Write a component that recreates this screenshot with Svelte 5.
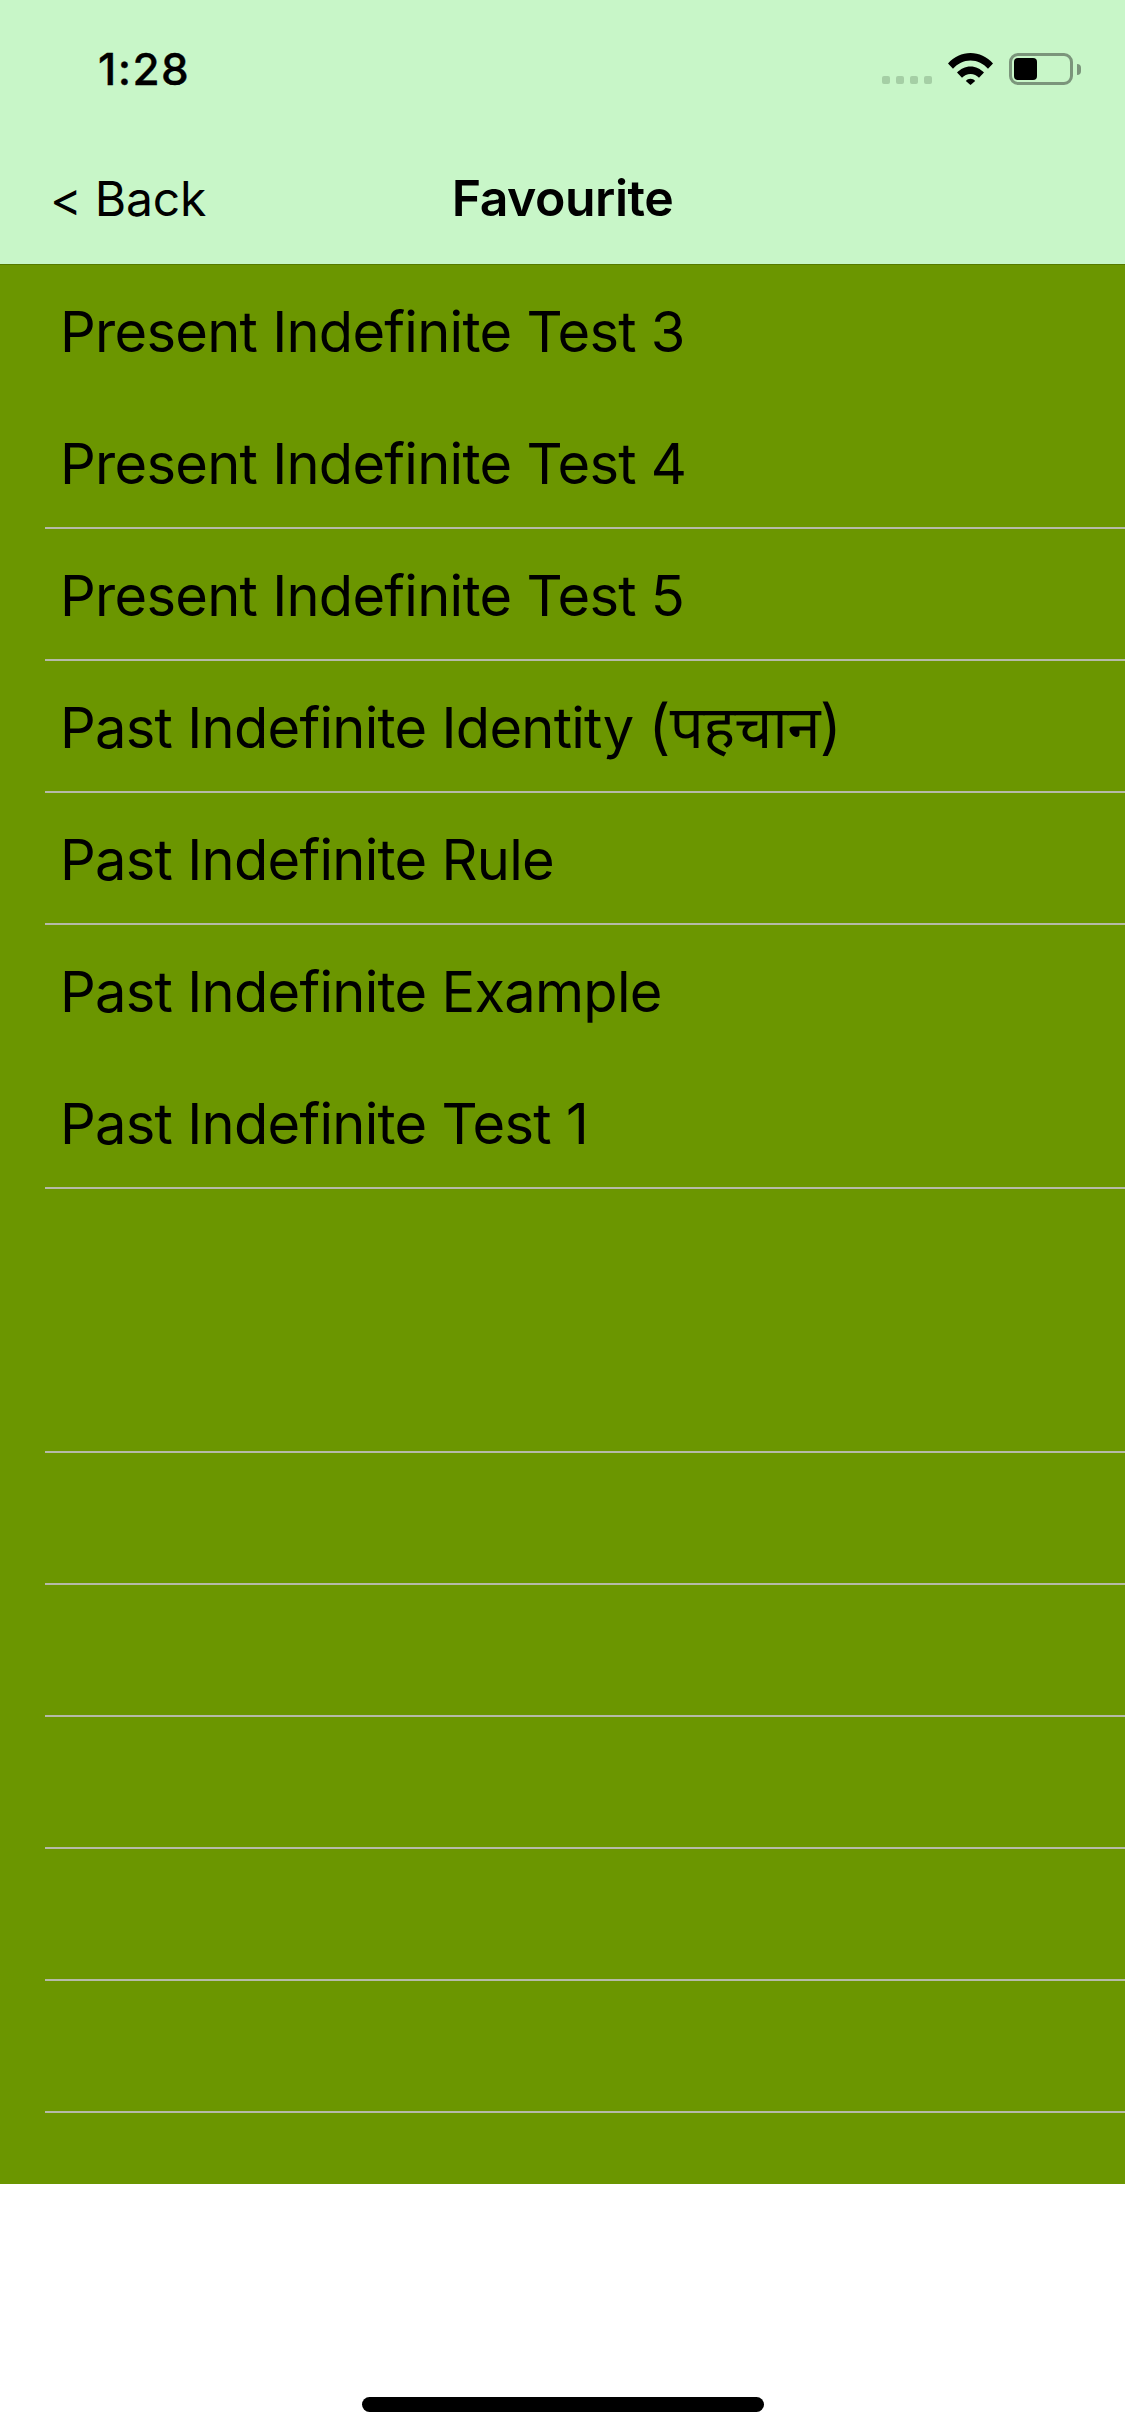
<script>
  const ROWS = [
    { label: 'Present Indefinite Test 3', line: false },
    { label: 'Present Indefinite Test 4', line: true },
    { label: 'Present Indefinite Test 5', line: true },
    { label: 'Past Indefinite Identity ', hi: '(पहचान)', line: true },
    { label: 'Past Indefinite Rule', line: true },
    { label: 'Past Indefinite Example', line: false },
    { label: 'Past Indefinite Test 1', line: true },
    { label: '', line: false },
    { label: '', line: true },
    { label: '', line: true },
    { label: '', line: true },
    { label: '', line: true },
    { label: '', line: true },
    { label: '', line: true },
  ];
</script>

<div class="screen">
  <header class="top">
    <div class="status">
      <span class="time">1:28</span>
      <div class="status-icons">
        <div class="signal">
          {#each [0, 1, 2, 3] as d (d)}
            <i></i>
          {/each}
        </div>
        <svg class="wifi" viewBox="0 0 45 32" width="45" height="32">
          <path d="M0 10.5C6 3.8 14 0 22.5 0S39 3.8 45 10.5L40 15.8C35.5 10.8 29.3 7.6 22.5 7.6S9.5 10.8 5 15.8Z" />
          <path d="M9 19.6C12.4 15.9 17.2 13.4 22.5 13.4S32.6 15.9 36 19.6L31 24.8C28.8 22.4 25.8 20.9 22.5 20.9S16.2 22.4 14 24.8Z" />
          <path d="M17.8 28C19 26.6 20.7 25.7 22.5 25.7S26 26.6 27.2 28L22.5 32Z" />
        </svg>
        <div class="battery">
          <div class="battery-body"><div class="battery-fill"></div></div>
          <div class="battery-nub"></div>
        </div>
      </div>
    </div>
    <nav class="nav">
      <span class="back">&lt; Back</span>
      <span class="title">Favourite</span>
      <span></span>
    </nav>
  </header>

  <ul class="list">
    {#each ROWS as r}
      <li class="row">
        <span class="row-label">{r.label}{#if r.hi}<span class="hi">{r.hi}</span>{/if}</span>
        {#if r.line}<div class="sep"></div>{/if}
      </li>
    {/each}
  </ul>

  <div class="home"><div class="home-bar"></div></div>
</div>

<style>
  :global(body) { margin: 0; background: #fff; }

  .screen {
    width: 1125px; height: 2436px;
    display: flex; flex-direction: column;
    font-family: Inter, "Noto Sans", "DejaVu Sans", sans-serif;
    color: #000;
    overflow: hidden;
  }

  .top { background: #c8f6c8; height: 264px; flex: none; }

  .status {
    height: 132px; box-sizing: border-box;
    padding: 44px 44px 0 98px;
    display: flex; justify-content: space-between; align-items: flex-start;
  }
  .time { font-size: 44px; line-height: 50px; font-weight: 500; letter-spacing: 1.4px; -webkit-text-stroke: 0.4px #000; }
  .status-icons { display: flex; align-items: flex-end; padding-top: 9px; }
  .signal { display: flex; gap: 6px; margin-right: 16px; padding-bottom: 1px; }
  .signal i { display: block; width: 8px; height: 8px; border-radius: 2px; background: #a5cfa5; }
  .wifi { display: block; fill: #000; margin-right: 16px; }
  .battery { display: flex; align-items: center; gap: 4px; }
  .battery-body {
    width: 64px; height: 32px; box-sizing: border-box;
    border: 3px solid #7b957b; border-radius: 9px;
    padding: 2px;
  }
  .battery-fill { width: 23px; height: 100%; background: #000; border-radius: 4px; }
  .battery-nub { width: 4px; height: 11px; background: #7b957b; border-radius: 0 4px 4px 0; }

  .nav {
    height: 132px;
    display: grid; grid-template-columns: 1fr auto 1fr; align-items: center;
    padding: 0 50px; font-size: 48px; letter-spacing: -0.2px;
  }
  .title { font-size: 50px; letter-spacing: -0.5px; font-weight: 600; }

  .list {
    list-style: none; margin: 0; padding: 0;
    background: #6b9600;
    border-top: 1px solid #557a00;
    box-sizing: border-box;
    height: 1920px; flex: none;
    overflow: hidden;
  }
  .row {
    height: 132px; box-sizing: border-box; position: relative;
    padding: 2px 0 0 60px;
    display: flex; align-items: center;
  }
  .row-label { font-size: 56px; line-height: 68px; letter-spacing: -0.72px; white-space: pre; }
  .hi { font-size: 60px; line-height: 0; }
  .sep {
    position: absolute; left: 45px; right: 0; bottom: 0;
    height: 2px; background: #b6baa8;
  }

  .home { flex: 1; display: flex; align-items: flex-end; justify-content: center; padding-bottom: 24px; }
  .home-bar { width: 402px; height: 15px; border-radius: 8px; background: #000; }
</style>
